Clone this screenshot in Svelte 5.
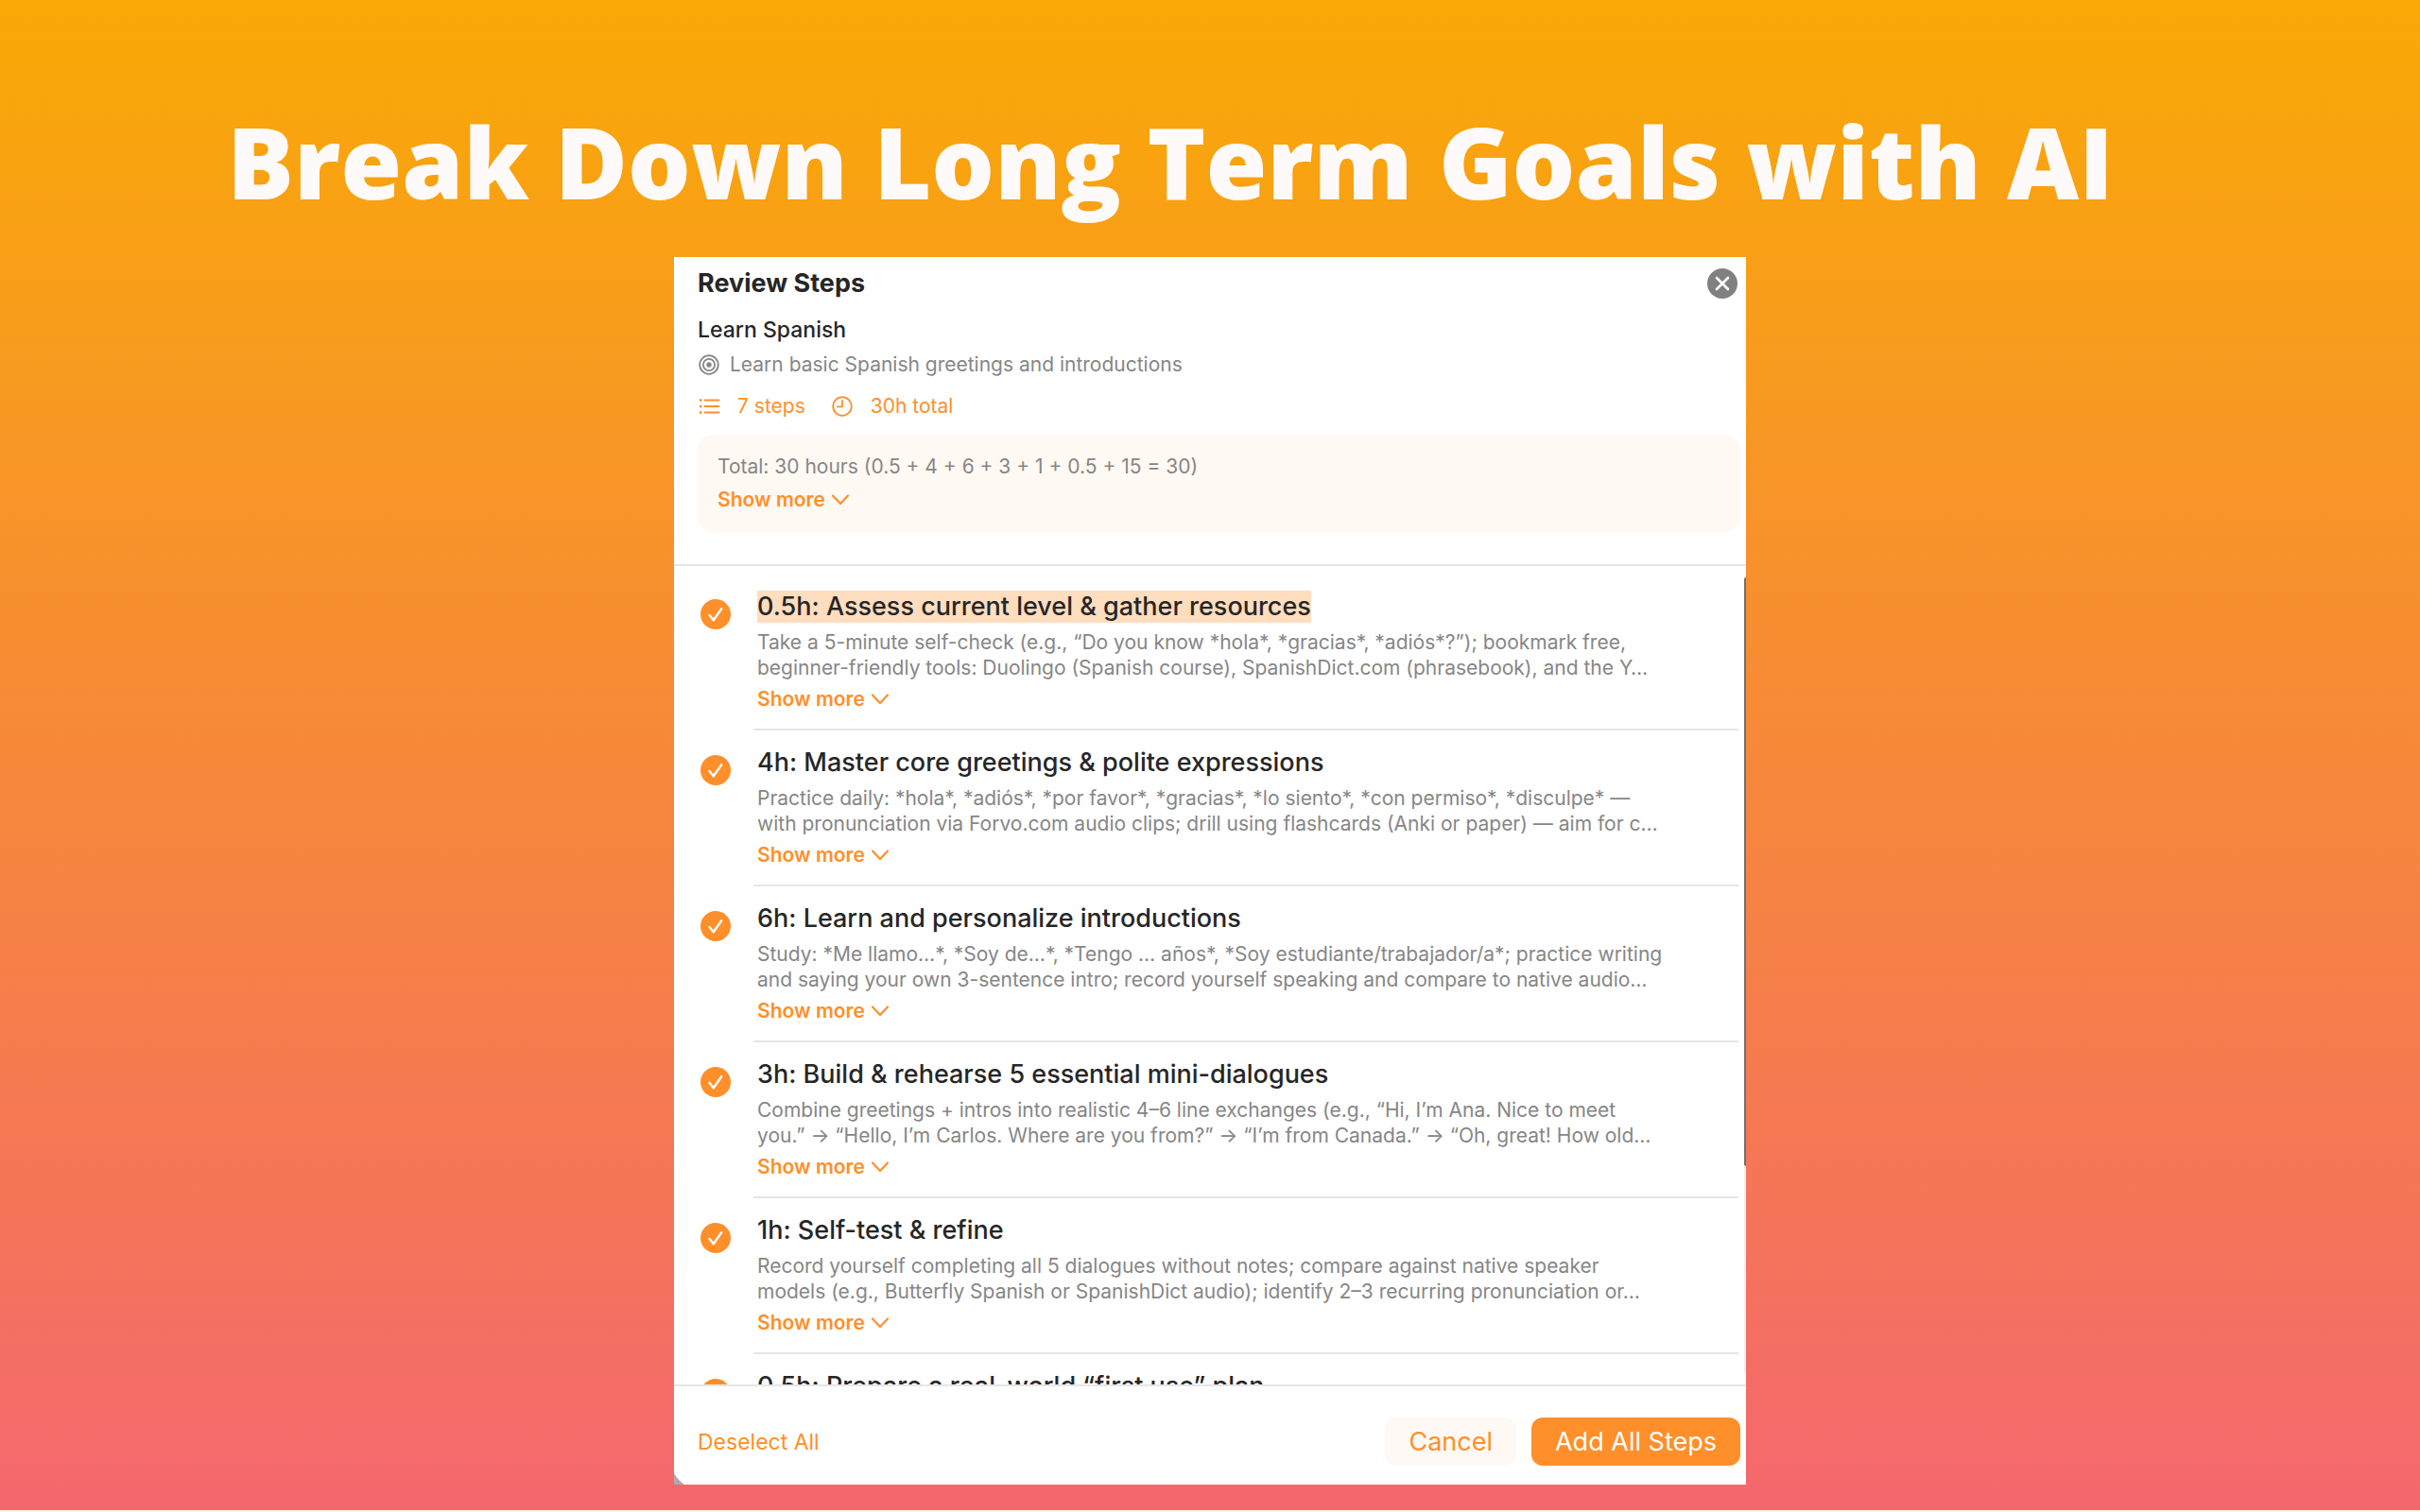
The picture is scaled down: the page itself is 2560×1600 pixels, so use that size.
<script lang="ts">
  interface Step {
    title: string;
    notes?: string;
    highlighted?: boolean;
  }

  const steps: Step[] = [
    {
      title: '0.5h: Assess current level & gather resources',
      notes:
        'Take a 5-minute self-check (e.g., “Do you know *hola*, *gracias*, *adiós*?”); bookmark free,\n' +
        'beginner-friendly tools: Duolingo (Spanish course), SpanishDict.com (phrasebook), and the Y…',
      highlighted: true
    },
    {
      title: '4h: Master core greetings & polite expressions',
      notes:
        'Practice daily: *hola*, *adiós*, *por favor*, *gracias*, *lo siento*, *con permiso*, *disculpe* —\n' +
        'with pronunciation via Forvo.com audio clips; drill using flashcards (Anki or paper) — aim for c…'
    },
    {
      title: '6h: Learn and personalize introductions',
      notes:
        'Study: *Me llamo…*, *Soy de…*, *Tengo … años*, *Soy estudiante/trabajador/a*; practice writing\n' +
        'and saying your own 3-sentence intro; record yourself speaking and compare to native audio…'
    },
    {
      title: '3h: Build & rehearse 5 essential mini-dialogues',
      notes:
        'Combine greetings + intros into realistic 4–6 line exchanges (e.g., “Hi, I’m Ana. Nice to meet\n' +
        'you.” → “Hello, I’m Carlos. Where are you from?” → “I’m from Canada.” → “Oh, great! How old…'
    },
    {
      title: '1h: Self-test & refine',
      notes:
        'Record yourself completing all 5 dialogues without notes; compare against native speaker\n' +
        'models (e.g., Butterfly Spanish or SpanishDict audio); identify 2–3 recurring pronunciation or…'
    },
    {
      title: '0.5h: Prepare a real-world “first use” plan'
    }
  ];

  let selected = $state(steps.map(() => true));

  function deselectAll() {
    selected = steps.map(() => false);
  }
</script>

{#snippet showMore()}
  <button type="button" class="more">
    Show more
    <svg width="20" height="20" viewBox="0 0 20 20" aria-hidden="true">
      <path d="M2 5.5 10 14l8-8.5" />
    </svg>
  </button>
{/snippet}

<main>
  <h1>Break Down Long Term Goals with AI</h1>

  <section class="sheet" aria-labelledby="sheet-title">
    <header>
      <div class="bar">
        <h2 id="sheet-title">Review Steps</h2>
        <button type="button" class="close" aria-label="Close">
          <svg width="32" height="32" viewBox="0 0 32 32" aria-hidden="true">
            <circle cx="16" cy="16" r="16" />
            <path d="m10 10 12 12M22 10 10 22" />
          </svg>
        </button>
      </div>

      <h3>Learn Spanish</h3>
      <p class="goal">
        <svg class="icon" width="24" height="24" viewBox="0 0 24 24" aria-hidden="true">
          <circle cx="12" cy="12" r="9.8" />
          <circle cx="12" cy="12" r="6.1" />
          <circle cx="12" cy="12" r="2.7" class="dot" />
        </svg>
        Learn basic Spanish greetings and introductions
      </p>

      <div class="meta">
        <span>
          <svg class="icon" width="24" height="24" viewBox="0 0 24 24" aria-hidden="true">
            <path d="M7.5 5.5h15M7.5 12h15M7.5 18.5h15" />
            <path d="M2 5.5h2.4M2 12h2.4M2 18.5h2.4" class="bullets" />
          </svg>
          7 steps
        </span>
        <span>
          <svg class="icon" width="24" height="24" viewBox="0 0 24 24" aria-hidden="true">
            <circle cx="12" cy="12" r="9.8" />
            <path d="M12 5.8v6.6H6.8" />
          </svg>
          30h total
        </span>
      </div>

      <div class="summary">
        <p>Total: 30 hours (0.5 + 4 + 6 + 3 + 1 + 0.5 + 15 = 30)</p>
        {@render showMore()}
      </div>
    </header>

    <div class="list">
      <ul>
        {#each steps as step, i}
          <li>
            <span class="check">
              <input type="checkbox" aria-label={step.title} bind:checked={selected[i]} />
              <svg width="32" height="32" viewBox="0 0 32 32" aria-hidden="true">
                <circle cx="16" cy="16" r="16" />
                {#if selected[i]}
                  <path d="m9.6 17 4.2 5.2 8.4-12" />
                {/if}
              </svg>
            </span>
            <div class="body">
              <h4><span class:highlighted={step.highlighted}>{step.title}</span></h4>
              {#if step.notes}
                <p>{step.notes}</p>
                {@render showMore()}
              {/if}
            </div>
          </li>
        {/each}
      </ul>
      <div class="track"><div class="thumb"></div></div>
    </div>

    <footer>
      <button type="button" class="link" onclick={deselectAll}>Deselect All</button>
      <button type="button" class="cancel">Cancel</button>
      <button type="button" class="primary">Add All Steps</button>
    </footer>

    <svg class="corner" width="11" height="12" viewBox="0 0 11 12" aria-hidden="true">
      <path d="M0 0Q4 7 11 12H0Z" />
    </svg>
  </section>
</main>

<style>
  :global(body) {
    margin: 0;
  }

  main {
    --accent: #ff8f2a;
    --text: #262626;
    --muted: #868686;
    --line: #e6e6e6;
    box-sizing: border-box;
    display: flex;
    flex-direction: column;
    align-items: center;
    height: 100vh;
    padding: 111px 24px 27px;
    border-bottom: 2px solid #fdf0f0;
    background: linear-gradient(#f9aa05, #f4676e);
    color: var(--text);
    font-family: Inter, 'Liberation Sans', sans-serif;
    font-size: 21px;
    line-height: 28px;
  }

  h1,
  h2,
  h3,
  h4,
  p,
  ul {
    margin: 0;
    padding: 0;
  }

  h1 {
    margin-bottom: 41px;
    padding-right: 84px;
    color: #fffafa;
    font: 800 105px/120px 'Open Sans', 'Noto Sans', sans-serif;
  }

  button {
    padding: 0;
    border: none;
    background: none;
    color: var(--accent);
    font: inherit;
    cursor: pointer;
  }

  svg {
    display: block;
    flex: none;
    fill: none;
    stroke: currentColor;
    stroke-linecap: round;
    stroke-linejoin: round;
  }

  .sheet {
    position: relative;
    display: flex;
    flex: 1;
    flex-direction: column;
    width: 100%;
    max-width: 1134px;
    min-height: 0;
    background: #fff;
  }

  header {
    padding: 12px 6px 34px 25px;
    border-bottom: 2px solid var(--line);
  }

  .bar {
    display: flex;
    align-items: center;
    justify-content: space-between;
    padding-right: 3px;
  }

  h2 {
    font-size: 27px;
    font-weight: 700;
    line-height: 32px;
  }

  .close circle {
    fill: #808080;
    stroke: none;
  }

  .close path {
    stroke: #fff;
    stroke-width: 2.6;
  }

  h3 {
    margin-top: 19px;
    font-size: 23px;
    font-weight: 500;
    line-height: 28px;
  }

  .icon {
    stroke-width: 1.8;
  }

  .icon .dot {
    fill: currentColor;
    stroke: none;
  }

  .icon .bullets {
    stroke-linecap: butt;
    stroke-width: 2.4;
  }

  .goal {
    display: flex;
    align-items: center;
    gap: 10px;
    margin-top: 9px;
    color: var(--muted);
  }

  .meta {
    display: flex;
    gap: 27px;
    margin-top: 16px;
    color: var(--accent);
  }

  .meta span {
    display: flex;
    align-items: center;
    gap: 18px;
  }

  .summary {
    display: grid;
    justify-items: start;
    gap: 7px;
    margin-top: 16px;
    padding: 20px 21px;
    border-radius: 16px;
    background: #fff9f3;
    color: var(--muted);
  }

  .more {
    display: flex;
    align-items: center;
    gap: 6px;
    font-weight: 600;
  }

  .more svg {
    stroke-width: 2.2;
  }

  .list {
    position: relative;
    flex: 1;
    min-height: 0;
    overflow: hidden;
  }

  ul {
    padding: 9px 8px 0 28px;
    list-style: none;
  }

  li {
    display: flex;
    gap: 24px;
  }

  .check {
    position: relative;
    flex: none;
    width: 32px;
    height: 32px;
    margin-top: 26px;
    color: var(--accent);
  }

  .check input {
    position: absolute;
    inset: 0;
    width: 100%;
    height: 100%;
    margin: 0;
    opacity: 0;
  }

  .check circle {
    fill: currentColor;
    stroke: none;
  }

  .check input:not(:checked) + svg {
    color: #d0d0d0;
  }

  .check path {
    stroke: #fff;
    stroke-width: 2.4;
  }

  .body {
    flex: 1;
    min-width: 0;
    padding: 17px 0 17px 4px;
    border-bottom: 2px solid var(--line);
  }

  h4 {
    font-size: 27px;
    font-weight: 500;
    line-height: 34px;
  }

  h4 span {
    display: inline-block;
  }

  .highlighted {
    background: #ffddbf;
  }

  .body p {
    margin: 7px 0 6px;
    color: var(--muted);
    line-height: 27px;
    white-space: pre-line;
  }

  .track {
    position: absolute;
    top: 12px;
    right: 0;
    bottom: 12px;
    width: 2px;
    background: #f0f0f0;
  }

  .thumb {
    height: 74%;
    border-radius: 2px 0 0 2px;
    background: #707070;
  }

  footer {
    display: flex;
    align-items: center;
    gap: 16px;
    padding: 33px 6px 20px 25px;
    border-top: 2px solid var(--line);
  }

  .link {
    margin-right: auto;
    font-size: 23px;
  }

  .cancel,
  .primary {
    padding: 0 25px;
    border-radius: 12px;
    font-size: 27px;
    line-height: 51px;
  }

  .cancel {
    background: #fff9f5;
  }

  .primary {
    background: var(--accent);
    color: #fff;
  }

  .corner {
    position: absolute;
    bottom: 0;
    left: 0;
    fill: #ababab;
    stroke: none;
  }
</style>
